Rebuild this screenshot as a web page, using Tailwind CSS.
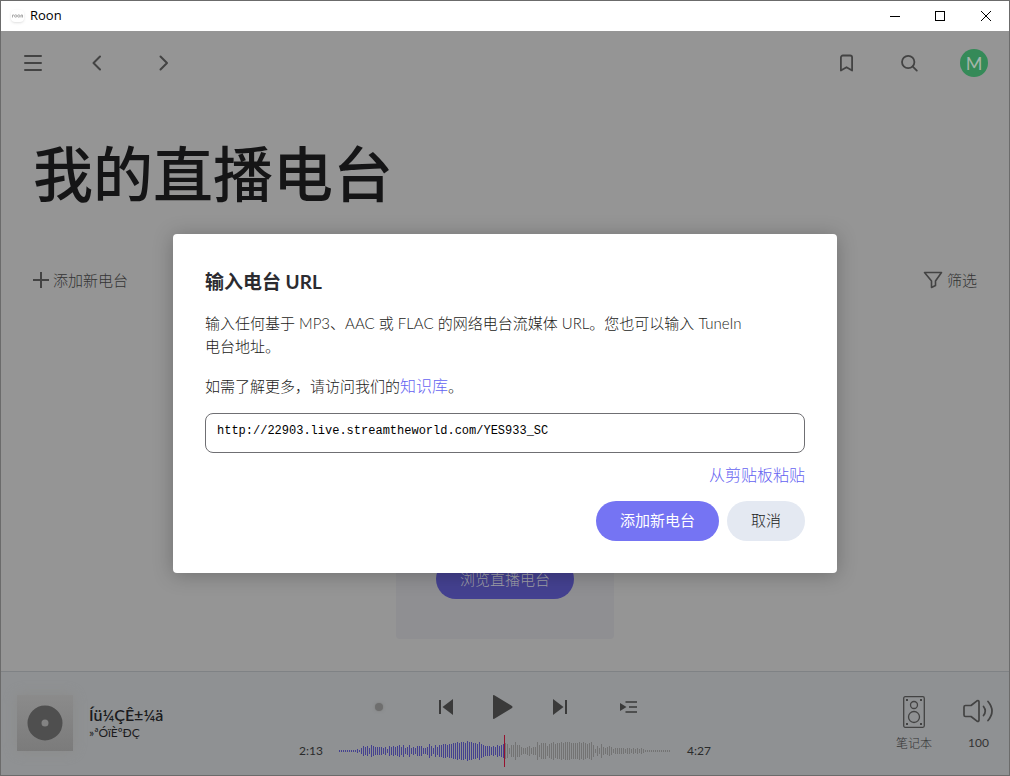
<!DOCTYPE html>
<html lang="zh-CN">
<head>
  <meta charset="UTF-8" />
  <meta name="viewport" content="width=device-width, initial-scale=1.0"/>
  <title>Roon</title>
  <script src="https://cdn.jsdelivr.net/npm/@tailwindcss/browser@4"></script>
</head>
<body class="h-screen flex flex-col overflow-hidden border border-[#6b6b6b] bg-[#959595] font-['Lato','Noto_Sans_CJK_SC',sans-serif] text-[15px] text-[#333333]">

  <!-- Window title bar -->
  <div class="h-[30px] shrink-0 bg-white flex items-center justify-between text-black">
    <div class="flex items-center gap-1.5 pl-2.5">
      <span class="w-[13px] h-3 rounded-sm shadow-sm flex items-center justify-center">
        <svg class="w-[11px] h-1" viewBox="0 0 11 4" fill="none" stroke="#aaa"><path d="M.5 3.5V1H2"/><circle cx="3.7" cy="2" r="1.2"/><circle cx="6.8" cy="2" r="1.2"/><path d="M9 3.5V1h1.5v2.5"/></svg>
      </span>
      <span class="font-['Open_Sans',sans-serif] text-[13px]">Roon</span>
    </div>
    <div class="flex">
      <button aria-label="Minimize" class="w-[45px] h-[30px] flex items-center justify-center">
        <svg class="w-[10px] h-[11px]" viewBox="0 0 10 11" shape-rendering="crispEdges"><path d="M0 5.5h10" stroke="#000"/></svg>
      </button>
      <button aria-label="Maximize" class="w-[46px] h-[30px] flex items-center justify-center">
        <svg class="w-[10px] h-[10px]" viewBox="0 0 10 10" shape-rendering="crispEdges"><path d="M.5.5h9v9h-9z" fill="none" stroke="#000"/></svg>
      </button>
      <button aria-label="Close" class="w-[46px] h-[30px] flex items-center justify-center">
        <svg class="w-[10px] h-[10px]" viewBox="0 0 10 10"><path d="M0 0l10 10M10 0L0 10" stroke="#000"/></svg>
      </button>
    </div>
  </div>

  <div class="relative flex-1 min-h-0 flex flex-col">

    <!-- Navigation -->
    <header class="h-16 shrink-0 flex items-center justify-between pl-[23px] pr-[21px]">
      <div class="flex items-center">
        <button aria-label="Menu" class="w-[18px]">
          <svg class="w-[18px] h-[18px]" viewBox="0 0 18 18" fill="none" stroke="#434343" stroke-width="2" stroke-linecap="round"><path d="M1 2h16M1 9h16M1 16h16"/></svg>
        </button>
        <button aria-label="Back" class="ml-[45px]">
          <svg class="w-[18px] h-[18px]" viewBox="0 0 18 18" fill="none" stroke="#434343" stroke-width="2" stroke-linecap="round" stroke-linejoin="round"><path d="M13 2.500L6.500 9l6.500 6.500"/></svg>
        </button>
        <button aria-label="Forward" class="ml-[49px]">
          <svg class="w-[18px] h-[18px]" viewBox="0 0 18 18" fill="none" stroke="#434343" stroke-width="2" stroke-linecap="round" stroke-linejoin="round"><path d="M6.500 2.500L13 9l-6.500 6.500"/></svg>
        </button>
      </div>
      <div class="flex items-center">
        <button aria-label="Bookmarks">
          <svg class="w-[18px] h-[18px]" viewBox="0 0 18 18" fill="none" stroke="#434343" stroke-width="1.800" stroke-linejoin="round"><path d="M3.900 16.500V3.500a2 2 0 0 1 2-2h7.200a2 2 0 0 1 2 2v13l-5.600-3.300z"/></svg>
        </button>
        <button aria-label="Search" class="ml-[45px]">
          <svg class="w-[18px] h-[18px]" viewBox="0 0 18 18" fill="none" stroke="#434343" stroke-width="1.800" stroke-linecap="round"><circle cx="8.200" cy="8" r="6.200"/><path d="M12.800 12.600l4 4"/></svg>
        </button>
        <button class="ml-[42px] w-7 h-7 rounded-full bg-[#358a58] text-[#a3b5aa] text-lg leading-7 text-center">M</button>
      </div>
    </header>

    <!-- Page -->
    <main class="flex-1 min-h-0 flex flex-col px-8">
      <h1 class="mt-[37px] text-[60px] leading-[84px] font-medium text-[#151516]">我的直播电台</h1>
      <div class="mt-[52px] flex justify-between leading-6">
        <button class="flex items-center gap-1">
          <svg class="w-4 h-4" viewBox="0 0 16 16" stroke="#434343" stroke-width="2"><path d="M0 8h16M8 0v16"/></svg>
          <span class="font-light">添加新电台</span>
        </button>
        <button class="flex items-center gap-1">
          <svg class="w-5 h-[18px]" viewBox="0 0 20 18" fill="none" stroke="#434343" stroke-width="1.600" stroke-linejoin="round"><path d="M1.500 1.500h17l-6 8.500v4.500L8.500 16.500V10z"/></svg>
          <span class="font-light">筛选</span>
        </button>
      </div>
      <div class="mt-auto mb-8 mx-auto h-[200px] rounded-sm bg-[#8f8f92] p-10 flex items-end">
        <button class="h-10 px-6 rounded-full bg-[#444190] text-[#a0a0a8] font-light">浏览直播电台</button>
      </div>
    </main>

    <!-- Now playing -->
    <footer class="h-[104px] shrink-0 border-t border-[#7f8285] bg-[#8f9193] grid grid-cols-[1fr_auto_1fr]">
      <div class="pl-4 pt-[23px] flex gap-4">
        <div class="w-14 h-14 bg-linear-to-b from-[#8b8b8b] to-[#7b7b7b] shadow-[0_0_12px_#8b8b8a] flex items-center justify-center">
          <svg class="w-9 h-9" viewBox="0 0 36 36"><circle cx="18" cy="18" r="10.500" fill="none" stroke="#4f4f4f" stroke-width="14"/></svg>
        </div>
        <div class="pt-[11px] text-[#1b1b1d]">
          <div class="text-base font-semibold leading-[18px]">Íü¼ÇÊ±¼ä</div>
          <div class="text-xs leading-[18px]">»ªÓïÈºÐÇ</div>
        </div>
      </div>

      <div class="pt-[23px]">
        <div class="flex items-center justify-center gap-10 h-6 pl-px">
          <span class="w-2 h-2 mr-4 rounded-full bg-[#6e6e6e] shadow-[0_0_3px_#7d7d7b]"></span>
          <button aria-label="Previous">
            <svg class="w-[14px] h-4" viewBox="0 0 14 16" fill="#3a3a3a"><path d="M0 1h2v14H0zM14 0v16L3.500 8z"/></svg>
          </button>
          <button aria-label="Play">
            <svg class="w-5 h-6" viewBox="0 0 20 24" fill="#3a3a3a"><path d="M0 1q0-1.500 1.300-.7L19 11q1 1 0 2L1.300 23.700Q0 24.500 0 23z"/></svg>
          </button>
          <button aria-label="Next">
            <svg class="w-[14px] h-4" viewBox="0 0 14 16" fill="#3a3a3a"><path d="M12 1h2v14h-2zM0 0v16l10.500-8z"/></svg>
          </button>
          <button aria-label="Queue" class="ml-[13px]">
            <svg class="w-[17px] h-3" viewBox="0 0 17 12" fill="#3a3a3a"><path d="M0 2v8l6.500-4z"/><path d="M5.500 1H17M9 6h8M5.500 11H17" stroke="#3a3a3a" stroke-width="1.500"/></svg>
          </button>
        </div>
        <div class="mt-4 flex items-center gap-4 text-xs text-[#2b2b2b]">
          <span>2:13</span>
          <svg id="wave" class="w-[332px] h-8" viewBox="0 0 332 32" shape-rendering="crispEdges"></svg>
          <span>4:27</span>
        </div>
      </div>

      <div class="flex justify-end gap-[31px] pr-[15px] pt-6 text-xs font-light">
        <button class="flex flex-col items-center">
          <svg class="w-[22px] h-8" viewBox="0 0 22 32" fill="none" stroke="#434343" stroke-width="1.300"><rect x=".7" y=".7" width="20.600" height="30.600" rx="1.500"/><circle cx="11" cy="9" r="3.500"/><circle cx="11" cy="21" r="5.500"/><path d="M3 4h2M17 4h2M3 28h2M17 28h2" stroke-width="2"/></svg>
          <span class="mt-[7px] leading-[18px]">笔记本</span>
        </button>
        <button class="flex flex-col items-center font-normal">
          <svg class="w-[31px] h-8" viewBox="0 0 31 32" fill="none" stroke="#434343" stroke-width="1.700" stroke-linecap="round" stroke-linejoin="round"><path d="M2.500 9.500H8l6-4.700Q16 4 16 6v18q0 2-2 1.200L8 20.500H2.500Q1 20.500 1 19v-8q0-1.500 1.500-1.500z"/><path d="M20.500 10.500q3.500 4.500 0 9"/><path d="M25 5.500q8 9.500 0 19"/></svg>
          <span class="mt-1.5 leading-[18px]">100</span>
        </button>
      </div>
    </footer>

    <!-- Add station dialog -->
    <div class="absolute inset-0 flex items-center justify-center">
      <form role="dialog" aria-labelledby="dialogTitle" class="w-full max-w-[664px] bg-white rounded p-8 shadow-[0_2px_20px_rgba(0,0,0,0.25)] text-[#1b1b20]">
        <h2 id="dialogTitle" class="text-[19px] leading-8 font-bold text-[#2b2b30]">输入电台 URL</h2>
        <p class="mt-3.5 max-w-[540px] leading-[23px] font-light">输入任何基于 MP3、AAC 或 FLAC 的网络电台流媒体 URL。您也可以输入 TuneIn 电台地址。</p>
        <p class="mt-4 leading-[23px] font-light">如需了解更多，请访问我们的<a href="#" class="text-base leading-[23px] text-[#6462f1]">知识库</a>。</p>
        <input type="text" aria-labelledby="dialogTitle" value="http://22903.live.streamtheworld.com/YES933_SC" class="mt-[15px] block w-full h-10 px-[11px] pb-1 border border-[#6f6f73] rounded-lg font-['Liberation_Mono',monospace] text-xs text-black">
        <div class="mt-2.5 text-right leading-6">
          <a href="#" class="text-base leading-6 font-light text-[#6462f1]">从剪贴板粘贴</a>
        </div>
        <div class="mt-3.5 flex justify-end gap-2">
          <button type="submit" class="h-10 px-6 rounded-full bg-[#7574f3] text-white">添加新电台</button>
          <button type="button" class="h-10 px-6 rounded-full bg-[#e4e9f2] font-light">取消</button>
        </div>
      </form>
    </div>
  </div>

<script>
  // bar heights, one bar every 2px
  const played = [2,2,2,2,2,2,2,2,2,4,2,6,10,8,10,6,12,10,8,8,8,8,6,8,4,10,8,10,8,10,12,8,12,6,8,12,6,8,6,10,10,10,6,6,8,14,10,6,12,8,12,12,14,14,12,14,14,16,16,18,16,18,18,16,20,18,18,16,16,14,18,14,12,10,10,10,8,10,8,12,10,12,14];
  const rest = [16,14,6,12,12,18,12,12,8,6,6,8,10,6,8,8,18,12,16,16,16,10,14,16,18,14,16,16,18,16,18,18,18,16,16,16,16,18,16,18,16,14,16,18,12,4,10,6,14,8,6,8,10,8,4,6,6,6,6,6,4,6,6,4,6,4,6,4,6,4,2,2,2,2,2,2,2,2,2,2,2,2,2];

  function bars(list, offset) {
    return list.map((h, i) => `M${offset + i * 2} ${16 - h / 2}h1v${h}h-1z`).join('');
  }

  document.getElementById('wave').innerHTML =
    `<path d="${bars(played, 0)}" fill="#444190"/>` +
    `<path d="${bars(rest, played.length * 2)}" fill="#737373"/>` +
    `<path d="M165 0h1v32h-1z" fill="#96122f"/>`;
</script>
</body>
</html>
